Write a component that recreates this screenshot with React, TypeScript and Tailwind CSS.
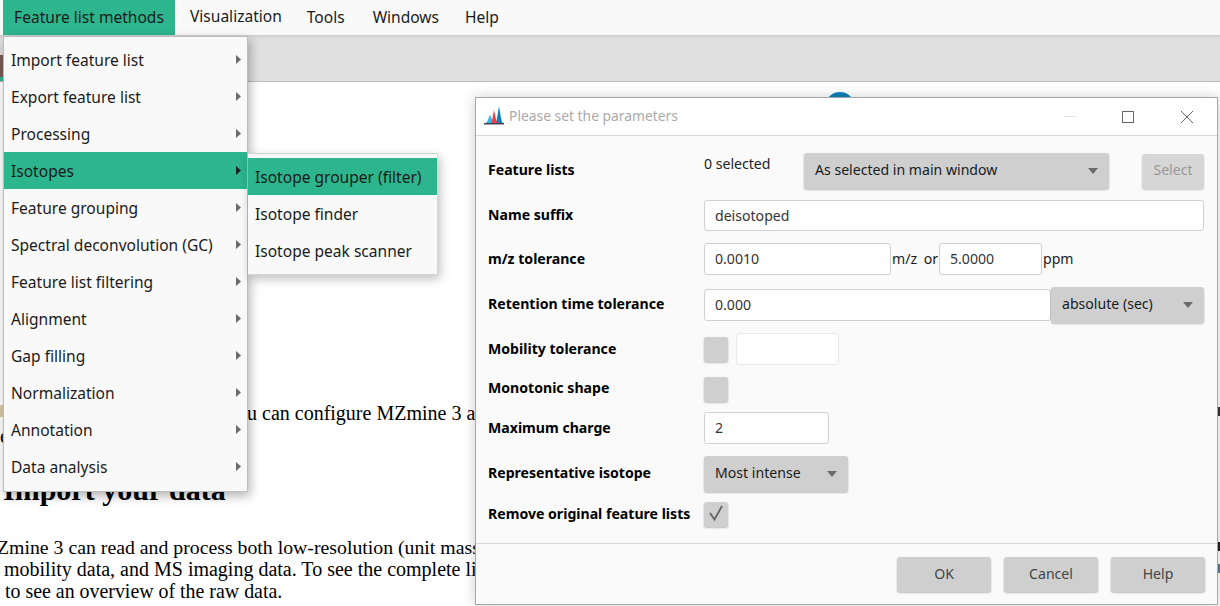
import React from "react";

const ui = "font-['Noto_Sans','Open_Sans',sans-serif]";
const menu = ["Import feature list","Export feature list","Processing","Isotopes","Feature grouping","Spectral deconvolution (GC)","Feature list filtering","Alignment","Gap filling","Normalization","Annotation","Data analysis"];

function Caret({ w = 10, h = 6, color = "#6b6b6b" }: { w?: number; h?: number; color?: string }) {
  return (
    <svg width={w} height={h} viewBox="0 0 10 6" className="shrink-0"><path d="M0 0H10L5 6Z" fill={color} /></svg>
  );
}

function Input({ w, value, dim }: { w: string; value?: string; dim?: boolean }) {
  return (
    <div className={`${w} h-full flex items-center rounded-[3px] border bg-white px-[10px] text-[#333] ${dim ? "border-[#eaeaea]" : "border-[#d0d0d0]"}`}>{value}</div>
  );
}

function Row({ label, className, lift = "-mt-[2px]", children }: { label: string; className: string; lift?: string; children?: React.ReactNode }) {
  return (
    <div className={`flex items-center ${className}`}>
      <div className="w-[216px] shrink-0 h-full flex items-center">
        <span className={`font-bold text-black text-[14.1px] ${lift}`}>{label}</span>
      </div>
      {children}
    </div>
  );
}

function Check({ checked }: { checked?: boolean }) {
  return (
    <div className="w-[24px] h-[25px] rounded-[3px] bg-[#cfcfcf] shadow-[0_1px_2px_rgba(0,0,0,0.25)]">
      {checked && <svg width="24" height="25" viewBox="0 0 24 25"><path d="M6 11L10.500 17.500L18 4" fill="none" stroke="#666" strokeWidth="1.8" /></svg>}
    </div>
  );
}

function Btn({ children }: { children: React.ReactNode }) {
  return <div className="w-[94px] h-[35px] rounded-[3px] bg-[#cfcfcf] shadow-[0_1px_2px_rgba(0,0,0,0.25)] flex items-center justify-center text-[#444]"><span className="-mt-[2px]">{children}</span></div>;
}

export default function App() {
  return (
    <div className={`relative w-[1220px] h-[606px] overflow-hidden bg-white ${ui} text-[15.55px] text-[#1a1a1a]`}>
      {/* menu bar */}
      <div className="h-[35px] bg-[#f9f9f9] flex items-start pl-[3px]">
        <div className="h-[35px] w-[172px] bg-[#2db58d] flex items-center justify-center">Feature list methods</div>
        <div className="ml-[15px] h-[35px] flex items-center">
          <span className="-mt-[2px]">Visualization</span>
          <span className="ml-[25px]">Tools</span>
          <span className="ml-[28px]">Windows</span>
          <span className="ml-[26px]">Help</span>
        </div>
      </div>
      {/* toolbar */}
      <div className="relative h-[47px] bg-[#e0e0e0] border-b border-[#bdbdbd] shadow-[inset_0_4px_4px_-3px_rgba(0,0,0,0.12)]">
        <div className="absolute left-0 top-[20px] w-[3px] h-[22px] bg-[#7a5a55]" />
        <div className="absolute left-0 top-[42px] w-[3px] h-[4px] bg-[#2db58d]" />
      </div>
      {/* page content */}
      <div className="font-['Liberation_Serif',serif] text-black">
        <div className="h-[319px] relative">
          <div className="absolute left-[825px] top-[10px] w-[30px] h-[30px] rounded-full bg-[#0e7fb8]" />
          <div className="absolute left-[0px] top-[323px] w-[3px] h-[12px] bg-[#d9c9a8]" />
          <div className="absolute left-[247px] top-[320px] whitespace-nowrap text-[20px] leading-[23px]">u can configure MZmine 3 a</div>
          <div className="absolute left-[0px] top-[343px] w-[4px] overflow-hidden text-[20px] leading-[23px]">e</div>
          <div className="absolute left-[1218px] top-[325px] w-[2px] h-[9px] bg-[#333]" />
          <div className="absolute left-[1218px] top-[460px] w-[2px] h-[9px] bg-[#222]" />
          <div className="absolute left-[1218px] top-[482px] w-[2px] h-[9px] bg-[#5a7a9a]" />
          <div className="absolute left-[3px] top-[390px] whitespace-nowrap text-[30px] font-bold leading-[36px]">Import your data</div>
        </div>
        <div className="mt-[135px] -ml-[3px] leading-[22px] whitespace-nowrap">
          <div className="text-[19.8px]">Zmine 3 can read and process both low-resolution (unit mass</div>
          <div className="pl-[7px] text-[20px]">mobility data, and MS imaging data. To see the complete li</div>
          <div className="pl-[8px] text-[19.9px]">to see an overview of the raw data.</div>
        </div>
      </div>

      {/* dropdown menu */}
      <div className="absolute left-[3px] top-[36px] w-[245px] h-[456px] bg-[#f9f9f9] border border-[#bdbdbd] py-[4px] shadow-[2px_4px_10px_rgba(0,0,0,0.3)]">
        {menu.map((m) => (
          <div key={m} className={`h-[37px] pl-[7px] pr-[6px] flex items-center justify-between ${m === "Isotopes" ? "bg-[#2db58d]" : ""}`}>
            <span className="mt-[2px]">{m}</span>
            <svg width="5" height="9" viewBox="0 0 5 9"><path d="M0 0L5 4.500L0 9Z" fill={m === "Isotopes" ? "#222" : "#6b6b6b"} /></svg>
          </div>
        ))}
      </div>
      {/* submenu */}
      <div className="absolute left-[248px] top-[153px] w-[190px] h-[122px] bg-[#f9f9f9] border border-[#d4d4d4] border-l-0 py-[4px] shadow-[2px_4px_10px_rgba(0,0,0,0.25)]">
        {["Isotope grouper (filter)", "Isotope finder", "Isotope peak scanner"].map((m, i) => (
          <div key={m} className={`h-[37px] pl-[7px] flex items-center ${i === 0 ? "bg-[#2db58d]" : ""}`}><span className="mt-[2px]">{m}</span></div>
        ))}
      </div>

      {/* dialog window */}
      <div className="absolute left-[475px] top-[97px] w-[743px] h-[508px] border border-[#a8a8a8] bg-[#fafafa] flex flex-col shadow-[0_0_12px_rgba(0,0,0,0.2)] text-[14.1px]">
        <div className="h-[38px] bg-white border-b border-[#d8d8d8] flex items-center shrink-0">
          <svg className="ml-[8px] -mt-[2px]" width="20" height="20" viewBox="0 0 20 20">
            <path d="M1.500 17C3.500 17 4.500 11 6 9C7.500 11 8.500 17 11 17Z" fill="#35b6e8" />
            <path d="M11 17C13 17 13.500 8 15 0.500C16.500 8 17.500 17 19 17Z" fill="#0e7fb8" />
            <path d="M7 17C8.500 15 9 8 10 4C11 8 12 15 13.500 17Z" fill="#e8404a" />
            <rect x="0" y="17" width="20" height="1.500" fill="#445" />
          </svg>
          <span className="ml-[5px] text-[13.85px] text-[#aaa]">Please set the parameters</span>
          <div className="ml-auto flex items-center">
            <div className="w-[12px] h-px bg-[#e4e4e4] mr-[46px]" />
            <div className="w-[12px] h-[12px] border border-[#666] mr-[46px]" />
            <svg className="mr-[23px]" width="14" height="14" viewBox="0 0 14 14"><path d="M1 1L13 13M13 1L1 13" stroke="#666" strokeWidth="1" fill="none" /></svg>
          </div>
        </div>
        <div className="flex-1 pl-[12px] pr-[13px] pt-[17px]">
          <Row label="Feature lists" className="h-[36px]">
            <div className="w-[100px] self-start text-[#222]">0 selected</div>
            <div className="w-[305px] h-[36px] rounded-[3px] bg-[#cfcfcf] shadow-[0_1px_2px_rgba(0,0,0,0.25)] flex items-center justify-between pl-[11px] pr-[11px]">
              <span className="-mt-[2px]">As selected in main window</span><Caret />
            </div>
            <div className="ml-[33px] w-[62px] h-[35px] rounded-[3px] bg-[#d6d6d6] shadow-[0_1px_2px_rgba(0,0,0,0.2)] flex items-center justify-center text-[#999]"><span className="-mt-[2px]">Select</span></div>
          </Row>
          <Row label="Name suffix" className="h-[31px] mt-[11px]"><Input w="w-[500px]" value="deisotoped" /></Row>
          <Row label="m/z tolerance" className="h-[32px] mt-[12px]" lift="mt-0">
            <Input w="w-[187px]" value="0.0010" />
            <div className="w-[48px] pl-[1px] flex justify-between pr-[1px]"><span>m/z</span><span>or</span></div>
            <Input w="w-[103px]" value="5.0000" />
            <span className="ml-[1px]">ppm</span>
          </Row>
          <Row label="Retention time tolerance" className="h-[36px] mt-[12px]">
            <div className="h-[32px]"><Input w="w-[347px]" value="0.000" /></div>
            <div className="w-[154px] h-[36px] rounded-[3px] bg-[#cfcfcf] shadow-[0_1px_2px_rgba(0,0,0,0.25)] flex items-center justify-between pl-[11px] pr-[11px]">
              <span className="-mt-[2px]">absolute (sec)</span><Caret />
            </div>
          </Row>
          <Row label="Mobility tolerance" className="h-[32px] mt-[10px]" lift="mt-0">
            <Check />
            <div className="ml-[8px] h-[32px]"><Input w="w-[103px]" dim /></div>
          </Row>
          <Row label="Monotonic shape" className="h-[25px] mt-[12px]" lift="-mt-[4px]"><Check /></Row>
          <Row label="Maximum charge" className="h-[32px] mt-[10px]" lift="mt-0"><Input w="w-[125px]" value="2" /></Row>
          <Row label="Representative isotope" className="h-[36px] mt-[12px]">
            <div className="w-[144px] h-[36px] rounded-[3px] bg-[#cfcfcf] shadow-[0_1px_2px_rgba(0,0,0,0.25)] flex items-center justify-between pl-[11px] pr-[11px]">
              <span className="-mt-[2px]">Most intense</span><Caret />
            </div>
          </Row>
          <Row label="Remove original feature lists" className="h-[25px] mt-[10px]"><Check checked /></Row>
        </div>
        <div className="h-[61px] border-t border-[#d8d8d8] shrink-0 flex justify-end items-start gap-[13px] pt-[13px] pr-[12px]">
          <Btn>OK</Btn><Btn>Cancel</Btn><Btn>Help</Btn>
        </div>
      </div>
    </div>
  );
}
